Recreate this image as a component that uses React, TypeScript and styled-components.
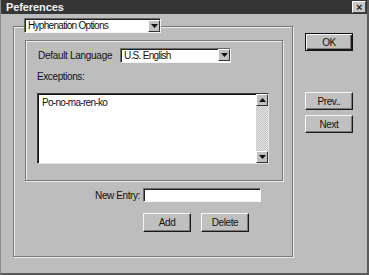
import React from "react";
import styled, { createGlobalStyle } from "styled-components";

const Global = createGlobalStyle`
  html, body { margin: 0; padding: 0; background: #bdbdbd; }
  body { font-family: "Liberation Sans", Arial, sans-serif; font-size: 10px; color: #111; letter-spacing: -0.4px; }
  * { box-sizing: border-box; }
`;

const Window = styled.div`
  width: 369px;
  height: 275px;
  background: #bdbdbd;
  border-left: 1px solid #8a8a8a;
  border-right: 2px solid #5a5a5a;
  border-bottom: 2px solid #5a5a5a;
  display: flex;
  flex-direction: column;
  overflow: hidden;
`;

const TitleBar = styled.div`
  height: 14px;
  background: #353535;
  display: flex;
  align-items: center;
  justify-content: space-between;
  padding: 0 1px 0 5px;
`;

const Title = styled.span`
  color: #f2f2f2;
  font-weight: bold;
  font-size: 11px;
  letter-spacing: -0.1px;
`;

const CloseBtn = styled.div`
  width: 14px;
  height: 12px;
  background: #c8c8c8;
  border: 1px solid;
  border-color: #fff #444 #444 #fff;
  display: flex;
  align-items: center;
  justify-content: center;
  font-size: 11px;
  font-weight: bold;
  line-height: 1;
  color: #222;
`;

const Body = styled.div`
  flex: 1;
  display: flex;
  padding-left: 12px;
`;

const Etched = styled.div`
  border: 1px solid #7a7a7a;
  box-shadow: inset 1px 1px 0 #ececec, 1px 1px 0 #ececec;
`;

const OptionsFrame = styled(Etched)`
  margin-top: 12px;
  width: 280px;
  height: 231px;
  display: flex;
  flex-direction: column;
`;

const Combo = styled.div<{ $w: number }>`
  width: ${(p) => p.$w}px;
  flex: none;
  height: 15px;
  background: #fff;
  border: 1px solid;
  border-color: #6a6a6a #f4f4f4 #f4f4f4 #6a6a6a;
  box-shadow: inset 1px 1px 0 #222;
  display: flex;
  align-items: center;
  padding-left: 3px;
  font-size: 10px;
`;

const ComboText = styled.span`
  flex: 1;
  white-space: nowrap;
  letter-spacing: -0.7px;
`;

const ArrowBtn = styled.div`
  width: 12px;
  height: 12px;
  background: #c0c0c0;
  border: 1px solid;
  border-color: #fff #333 #333 #fff;
  display: flex;
  align-items: center;
  justify-content: center;
`;

const HeaderCombo = styled(Combo)`
  margin: -9px 0 0 10px;
`;

const InnerFrame = styled(Etched)`
  margin: 7px 0 0 11px;
  width: 258px;
  height: 141px;
  display: flex;
  flex-direction: column;
  padding-left: 11px;
`;

const LangRow = styled.div`
  display: flex;
  align-items: center;
  margin-top: 7px;
  height: 14px;
`;

const Label = styled.span`
  font-size: 10px;
  white-space: nowrap;
`;

const LangLabel = styled(Label)`
  width: 83px;
  padding-left: 1px;
  letter-spacing: -0.3px;
`;

const ExcLabel = styled(Label)`
  margin-top: 9px;
  padding-left: 0;
`;

const ListBox = styled.div`
  margin-top: 11px;
  width: 232px;
  height: 71px;
  background: #fff;
  border: 1px solid;
  border-color: #3a3a3a #e4e4e4 #e4e4e4 #3a3a3a;
  box-shadow: inset 1px 1px 0 #111;
  display: flex;
`;

const ListItems = styled.div`
  flex: 1;
  padding: 3px 0 0 4px;
  font-size: 10px;
  letter-spacing: -0.7px;
`;

const ScrollBar = styled.div`
  width: 12px;
  display: flex;
  flex-direction: column;
  justify-content: space-between;
  background: repeating-conic-gradient(#e4e4e4 0% 25%, #c4c4c4 0% 50%) 0 0 / 2px 2px;
`;

const EntryRow = styled.div`
  display: flex;
  align-items: center;
  margin: 7px 0 0 0;
  padding-left: 76px;
  height: 14px;
`;

const EntryLabel = styled(Label)`
  width: 53px;
  text-align: right;
  padding-right: 3px;
`;

const EntryInput = styled.div`
  width: 118px;
  height: 14px;
  background: #fff;
  border: 1px solid;
  border-color: #6a6a6a #f4f4f4 #f4f4f4 #6a6a6a;
  box-shadow: inset 1px 1px 0 #222;
`;

const ButtonRow = styled.div`
  display: flex;
  gap: 10px;
  margin: 11px 0 0 129px;
`;

const Button = styled.div<{ $h?: number; $default?: boolean }>`
  width: 48px;
  height: ${(p) => p.$h ?? 19}px;
  background: #c0c0c0;
  border: 1px solid;
  border-color: ${(p) => (p.$default ? "#111" : "#f6f6f6 #1a1a1a #1a1a1a #f6f6f6")};
  box-shadow: ${(p) =>
    p.$default
      ? "inset 1px 1px 0 #f6f6f6, inset -1px -1px 0 #1a1a1a, inset -2px -2px 0 #7a7a7a"
      : "inset -1px -1px 0 #7a7a7a"};
  display: flex;
  align-items: center;
  justify-content: center;
  font-size: 10px;
`;

const Side = styled.div`
  margin: 19px 0 0 12px;
  display: flex;
  flex-direction: column;
`;

const NavGroup = styled.div`
  margin-top: 41px;
  display: flex;
  flex-direction: column;
  gap: 5px;
`;

const Tri = ({ up }: { up?: boolean }) => (
  <svg width="7" height="4" viewBox="0 0 7 4">
    <path d={up ? "M0 4 L3.5 0 L7 4 Z" : "M0 0 L7 0 L3.5 4 Z"} fill="#111" />
  </svg>
);

export default function App() {
  return (
    <>
      <Global />
      <Window>
        <TitleBar>
          <Title>Peferences</Title>
          <CloseBtn>×</CloseBtn>
        </TitleBar>
        <Body>
          <OptionsFrame>
            <HeaderCombo $w={137}>
              <ComboText>Hyphenation Options</ComboText>
              <ArrowBtn>
                <Tri />
              </ArrowBtn>
            </HeaderCombo>
            <InnerFrame>
              <LangRow>
                <LangLabel>Default Language</LangLabel>
                <Combo $w={111}>
                  <ComboText>U.S. English</ComboText>
                  <ArrowBtn>
                    <Tri />
                  </ArrowBtn>
                </Combo>
              </LangRow>
              <ExcLabel>Exceptions:</ExcLabel>
              <ListBox>
                <ListItems>Po-no-ma-ren-ko</ListItems>
                <ScrollBar>
                  <ArrowBtn>
                    <Tri up />
                  </ArrowBtn>
                  <ArrowBtn>
                    <Tri />
                  </ArrowBtn>
                </ScrollBar>
              </ListBox>
            </InnerFrame>
            <EntryRow>
              <EntryLabel>New Entry:</EntryLabel>
              <EntryInput />
            </EntryRow>
            <ButtonRow>
              <Button>Add</Button>
              <Button>Delete</Button>
            </ButtonRow>
          </OptionsFrame>
          <Side>
            <Button $h={18} $default>OK</Button>
            <NavGroup>
              <Button $h={18}>Prev..</Button>
              <Button $h={18}>Next</Button>
            </NavGroup>
          </Side>
        </Body>
      </Window>
    </>
  );
}
